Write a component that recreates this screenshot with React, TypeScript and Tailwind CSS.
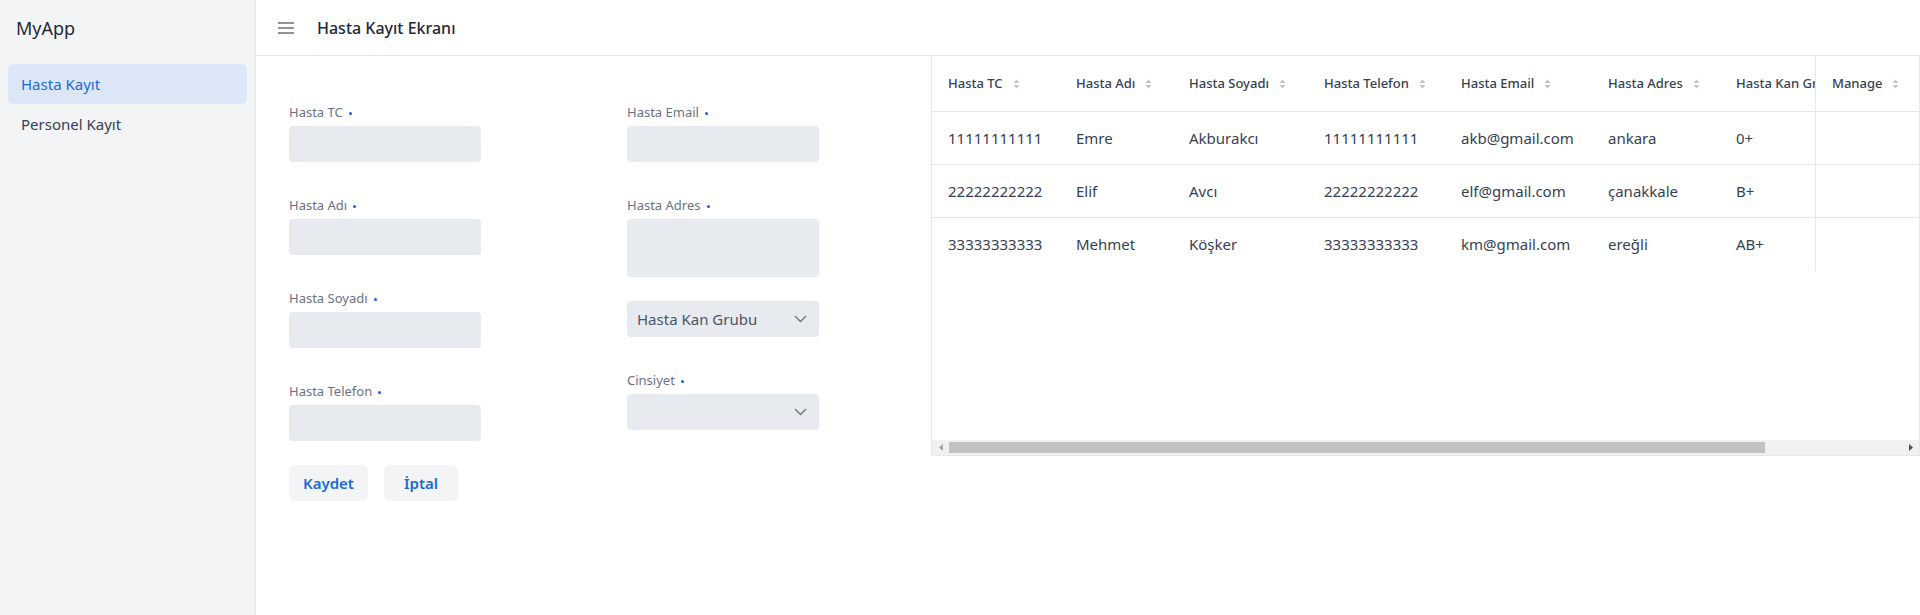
import React from "react";

type Patient = {
  tc: string;
  ad: string;
  soyad: string;
  telefon: string;
  email: string;
  adres: string;
  kan: string;
};

const patients: Patient[] = [
  { tc: "11111111111", ad: "Emre", soyad: "Akburakcı", telefon: "11111111111", email: "akb@gmail.com", adres: "ankara", kan: "0+" },
  { tc: "22222222222", ad: "Elif", soyad: "Avcı", telefon: "22222222222", email: "elf@gmail.com", adres: "çanakkale", kan: "B+" },
  { tc: "33333333333", ad: "Mehmet", soyad: "Köşker", telefon: "33333333333", email: "km@gmail.com", adres: "ereğli", kan: "AB+" },
];

const columns = [
  { title: "Hasta TC", width: 128 },
  { title: "Hasta Adı", width: 113 },
  { title: "Hasta Soyadı", width: 135 },
  { title: "Hasta Telefon", width: 137 },
  { title: "Hasta Email", width: 147 },
  { title: "Hasta Adres", width: 128 },
];

const SortIcon = () => (
  <svg width="7" height="10" viewBox="0 0 7 10" className="ml-2.5 inline-block shrink-0">
    <path d="M3.5 0.5 L6.5 4 L0.5 4 Z" fill="#bfc3c9" />
    <path d="M3.5 9.5 L6.5 6 L0.5 6 Z" fill="#bfc3c9" />
  </svg>
);

const Chevron = () => (
  <svg width="13" height="8" viewBox="0 0 13 8" fill="none">
    <path d="M1 1 L6.5 6.5 L12 1" stroke="#6b7280" strokeWidth="1.3" />
  </svg>
);

const Label = ({ text }: { text: string }) => (
  <div className="flex items-center h-5 mb-[3px] text-[13px] text-gray-500">
    <span>{text}</span>
    <span className="ml-1.5 w-[3px] h-[3px] rounded-full bg-blue-600" />
  </div>
);

const Input = ({ text, last }: { text: string; last?: boolean }) => (
  <div className={last ? "" : "mb-[34px]"}>
    <Label text={text} />
    <div className="h-9 w-48 rounded bg-[#e7eaee]" />
  </div>
);

const SelectBox = ({ placeholder }: { placeholder?: string }) => (
  <div className="h-9 w-48 rounded bg-[#e7eaee] flex items-center justify-between pl-2.5 pr-3">
    <span className="text-[15px] text-gray-600">{placeholder}</span>
    <Chevron />
  </div>
);

const PatientForm = () => (
  <div className="flex-1 pl-[33px] pt-[47px]">
    <div className="flex gap-[146px]">
      <div>
        <Input text="Hasta TC" />
        <Input text="Hasta Adı" />
        <Input text="Hasta Soyadı" />
        <Input text="Hasta Telefon" last />
      </div>
      <div>
        <Input text="Hasta Email" />
        <div className="mb-6">
          <Label text="Hasta Adres" />
          <div className="h-[58px] w-48 rounded bg-[#e7eaee]" />
        </div>
        <div className="mb-[34px]">
          <SelectBox placeholder="Hasta Kan Grubu" />
        </div>
        <div>
          <Label text="Cinsiyet" />
          <SelectBox />
        </div>
      </div>
    </div>
    <div className="flex gap-4 mt-6">
      <button className="h-9 px-[14px] rounded-md bg-gray-100 text-[15px] font-semibold text-[#1b6ad9]">
        Kaydet
      </button>
      <button className="h-9 px-5 rounded-md bg-gray-100 text-[15px] font-semibold text-[#1b6ad9]">
        İptal
      </button>
    </div>
  </div>
);

const thClass = "px-4 text-left font-medium text-[13px] text-gray-700 whitespace-nowrap border-b border-gray-200";

const PatientTable = () => (
  <div className="w-[989px] shrink-0 flex flex-col border-x border-b border-gray-200 self-start">
    <div className="h-[384px] overflow-hidden">
      <table className="table-fixed border-separate border-spacing-0 w-[1155px]">
        <colgroup>
          {columns.map((c) => (
            <col key={c.title} style={{ width: c.width }} />
          ))}
          <col style={{ width: 263 }} />
          <col style={{ width: 104 }} />
        </colgroup>
        <thead>
          <tr className="h-14">
            {columns.map((c) => (
              <th key={c.title} className={thClass}>
                <span className="inline-flex items-center">
                  {c.title}
                  <SortIcon />
                </span>
              </th>
            ))}
            <th className={thClass}>
              <span className="block w-[79px] overflow-hidden">Hasta Kan Grubu</span>
            </th>
            <th className={`sticky right-0 bg-white border-l ${thClass}`}>
              <span className="inline-flex items-center">
                Manage
                <SortIcon />
              </span>
            </th>
          </tr>
        </thead>
        <tbody className="text-[15px] text-gray-700">
          {patients.map((p, i) => {
            const line = i < patients.length - 1 ? "border-b border-gray-200" : "";
            return (
              <tr key={p.tc} className="h-[53px]">
                <td className={`px-4 ${line}`}>{p.tc}</td>
                <td className={`px-4 ${line}`}>{p.ad}</td>
                <td className={`px-4 ${line}`}>{p.soyad}</td>
                <td className={`px-4 ${line}`}>{p.telefon}</td>
                <td className={`px-4 ${line}`}>{p.email}</td>
                <td className={`px-4 ${line}`}>{p.adres}</td>
                <td className={`px-4 ${line}`}>{p.kan}</td>
                <td className={`sticky right-0 bg-white border-l border-gray-200 px-4 ${line}`} />
              </tr>
            );
          })}
        </tbody>
      </table>
    </div>
    <div className="h-[15px] bg-[#f1f1f1] flex items-center">
      <div className="w-[17px] flex justify-center">
        <svg width="4" height="7" viewBox="0 0 4 7">
          <path d="M4 0 L0 3.5 L4 7 Z" fill="#a3a3a3" />
        </svg>
      </div>
      <div className="w-[816px] h-[11px] bg-[#c1c1c1]" />
      <div className="flex-1" />
      <div className="w-[16px] flex justify-center">
        <svg width="4" height="7" viewBox="0 0 4 7">
          <path d="M0 0 L4 3.5 L0 7 Z" fill="#505050" />
        </svg>
      </div>
    </div>
  </div>
);

export default function App() {
  return (
    <div className="flex h-[615px] w-full bg-white font-['Noto_Sans',sans-serif]">
      <aside className="w-64 shrink-0 bg-gray-100 border-r border-gray-200">
        <div className="h-14 px-4 flex items-center text-[18px] text-gray-800">MyApp</div>
        <nav className="mt-2 px-2">
          <div className="h-10 px-[13px] flex items-center rounded-md bg-[#dbe6f7] text-[15px] text-[#1b6ad9]">
            Hasta Kayıt
          </div>
          <div className="h-10 px-[13px] flex items-center text-[15px] text-gray-700">Personel Kayıt</div>
        </nav>
      </aside>
      <div className="flex-1 flex flex-col">
        <header className="h-14 shrink-0 border-b border-gray-200 flex items-center pl-[22px]">
          <svg width="16" height="12" viewBox="0 0 16 12" className="mr-[23px]">
            <path d="M0 1 H16 M0 6 H16 M0 11 H16" stroke="#6b7280" strokeWidth="1.5" />
          </svg>
          <h1 className="text-[16px] font-medium text-gray-800">Hasta Kayıt Ekranı</h1>
        </header>
        <main className="flex flex-1">
          <PatientForm />
          <PatientTable />
        </main>
      </div>
    </div>
  );
}
